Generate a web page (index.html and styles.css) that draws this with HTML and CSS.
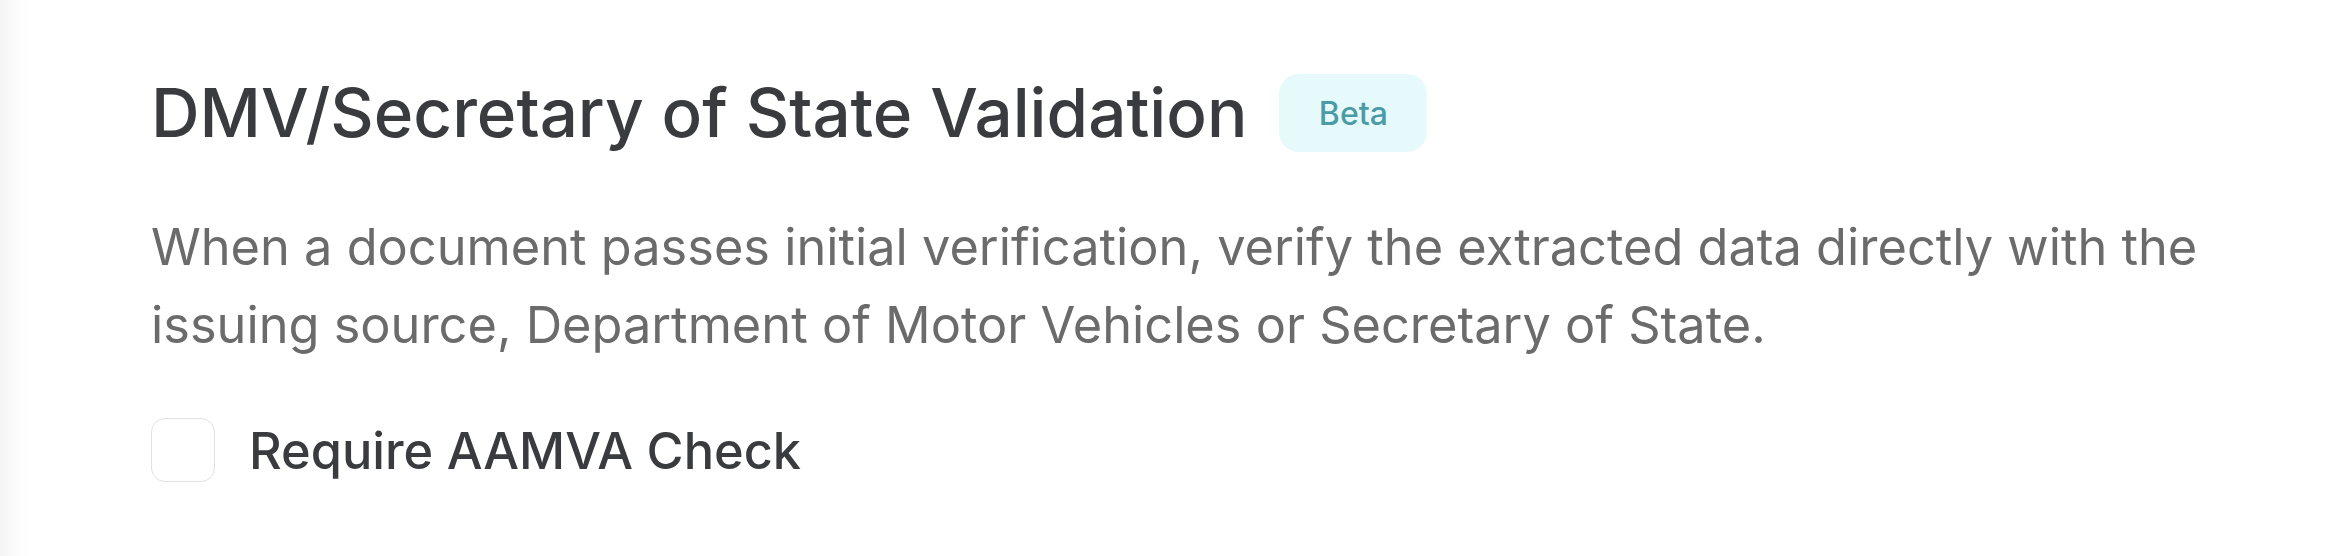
FILE: index.html
```html
<!DOCTYPE html>
<html lang="en">
<head>
<meta charset="utf-8">
<link rel="stylesheet" href="styles.css">
</head>
<body>
<main class="page">
  <section class="setting">
    <div class="title-row">
      <h2 class="title">DMV/Secretary of State Validation</h2>
      <span class="badge">Beta</span>
    </div>
    <p class="desc">When a document passes initial verification, verify the extracted data directly with the issuing source, Department of Motor Vehicles or Secretary of State.</p>
    <label class="check-row">
      <span class="checkbox"></span>
      <span class="check-label">Require AAMVA Check</span>
    </label>
  </section>
</main>
</body>
</html>
```
FILE: styles.css
```css
html, body {
  margin: 0;
  padding: 0;
  background: #ffffff;
}
body {
  font-family: Inter, "Noto Sans", "Liberation Sans", sans-serif;
  width: 2338px;
  height: 556px;
  overflow: hidden;
}
.page {
  height: 556px;
  background: linear-gradient(to right, #f4f4f4 0px, #fbfbfb 14px, #ffffff 34px);
  padding: 74px 0 0 151px;
  box-sizing: border-box;
}
.setting {
  width: 2060px;
}
.title-row {
  display: flex;
  align-items: center;
  gap: 32px;
}
.title {
  margin: 0;
  font-size: 67.3px;
  font-weight: 500;
  color: #3a3b3f;
  line-height: 78px;
  letter-spacing: 0;
}
.badge {
  display: inline-flex;
  align-items: center;
  justify-content: center;
  width: 148px;
  height: 78px;
  border-radius: 20px;
  background: #e6fafc;
  color: #4b9ba6;
  font-size: 32px;
  font-weight: 500;
}
.desc {
  margin: 56px 0 0;
  font-size: 50.5px;
  line-height: 78px;
  color: #6b6b6b;
  font-weight: 400;
  letter-spacing: 0;
}
.check-row {
  display: flex;
  align-items: center;
  gap: 34px;
  margin-top: 54px;
}
.checkbox {
  width: 62px;
  height: 62px;
  border: 1.5px solid #e1e1e1;
  border-radius: 14px;
  background: #fff;
  flex: none;
}
.check-label {
  font-size: 50.5px;
  font-weight: 500;
  color: #3a3b3f;
}
```
